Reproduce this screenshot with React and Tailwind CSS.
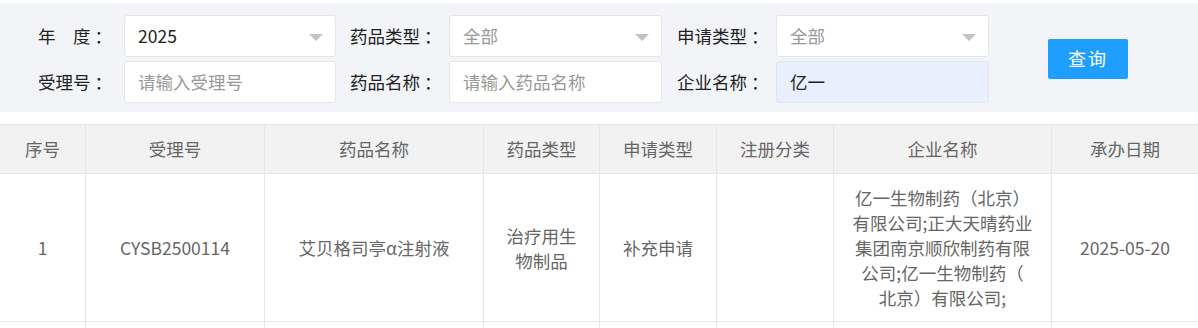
import React from "react";

const font = { fontFamily: '"Microsoft YaHei", "Noto Sans CJK SC", "Noto Sans", sans-serif' };

function Arrow() {
  return (
    <span className="absolute right-[12px] top-[18px] w-0 h-0 border-l-[7px] border-r-[7px] border-t-[7px] border-l-transparent border-r-transparent border-t-[#c2c2c2]" />
  );
}

function Field({ value, placeholder, select, filled }) {
  return (
    <div
      className={`relative h-[42px] rounded-[3px] border border-[#e6e6e6] flex items-center pl-[13px] text-[17.5px] ${
        filled ? "bg-[#e8f0fe]" : "bg-white"
      }`}
    >
      {value ? (
        <span className="text-[#222]">{value}</span>
      ) : (
        <span className="text-[#999]">{placeholder}</span>
      )}
      {select && <Arrow />}
    </div>
  );
}

function Label({ text, className }) {
  return (
    <div className={className}>
      {text}
      <span className="pl-[4px]">：</span>
    </div>
  );
}

const headers = ["序号", "受理号", "药品名称", "药品类型", "申请类型", "注册分类", "企业名称", "承办日期"];

const company = [
  "亿一生物制药（北京）",
  "有限公司;正大天晴药业",
  "集团南京顺欣制药有限",
  "公司;亿一生物制药（",
  "北京）有限公司;",
];

export default function App() {
  const cols = "grid grid-cols-[86px_179px_219px_116px_117px_117px_218px_1fr]";
  return (
    <div className="w-[1198px] h-[328px] overflow-hidden bg-white" style={font}>
      {/* Filter bar */}
      <div className="mt-[3px] bg-[#f3f4f8] pt-[12px] pb-[9px]">
        <div className="grid grid-cols-[124px_212px_113px_213px_114px_213px_1fr] gap-y-[4px] items-center text-[17.5px] text-[#222]">
          <Label text="年　度" className="text-right pr-[12px]" />
          <Field value="2025" select />
          <Label text="药品类型" className="pl-[14px]" />
          <Field placeholder="全部" select />
          <Label text="申请类型" className="pl-[15px]" />
          <Field placeholder="全部" select />
          <div className="row-span-2 self-center pl-[59px] -mt-[1px]">
            <button className="w-[80px] h-[40px] rounded-[2px] bg-[#1e9fff] text-white text-[18px] tracking-[2px]">
              查询
            </button>
          </div>

          <Label text="受理号" className="text-right pr-[12px]" />
          <Field placeholder="请输入受理号" />
          <Label text="药品名称" className="pl-[14px]" />
          <Field placeholder="请输入药品名称" />
          <Label text="企业名称" className="pl-[15px]" />
          <Field value="亿一" filled />
        </div>
      </div>

      {/* Table */}
      <div className="mt-[12px] text-[17.5px] text-[#666]">
        <div className={`${cols} bg-[#f2f2f2] border-t border-[#e6e6e6]`}>
          {headers.map((h, i) => (
            <div
              key={h}
              className={`h-[49px] flex items-center justify-center border-b border-[#e6e6e6] ${
                i < headers.length - 1 ? "border-r" : ""
              }`}
            >
              {h}
            </div>
          ))}
        </div>
        <div className={cols}>
          <Cell>1</Cell>
          <Cell>CYSB2500114</Cell>
          <Cell>艾贝格司亭α注射液</Cell>
          <Cell>治疗用生物制品</Cell>
          <Cell>补充申请</Cell>
          <Cell></Cell>
          <Cell>
            <div>
              {company.map((l) => (
                <div key={l}>{l}</div>
              ))}
            </div>
          </Cell>
          <Cell last>2025-05-20</Cell>
        </div>
        <div className={cols}>
          {headers.map((h, i) => (
            <div key={h} className={`h-[20px] ${i < headers.length - 1 ? "border-r border-[#e6e6e6]" : ""}`} />
          ))}
        </div>
      </div>
    </div>
  );
}

function Cell({ children, last }) {
  return (
    <div
      className={`h-[148px] px-[17px] flex items-center justify-center text-center leading-[25px] border-b border-[#e6e6e6] ${
        last ? "" : "border-r"
      }`}
    >
      {children}
    </div>
  );
}
